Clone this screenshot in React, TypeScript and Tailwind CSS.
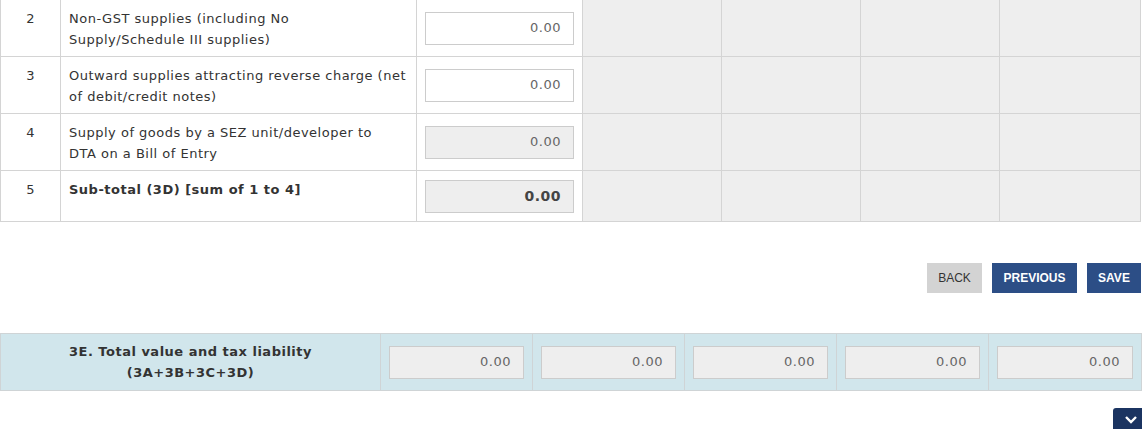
import React from "react";

const font = { fontFamily: '"DejaVu Sans", Verdana, sans-serif' };
const btnFont = { fontFamily: '"Liberation Sans", Arial, sans-serif' };

function Inp({ disabled, bold }: { disabled?: boolean; bold?: boolean }) {
  return (
    <div
      className={`h-[33px] w-[149px] border border-[#cccccc] flex items-center justify-end pr-[12px] tracking-[0.5px] ${
        disabled ? "bg-[#eeeeee]" : "bg-white"
      } ${bold ? "font-bold text-[14px] text-[#444]" : "text-[13px] text-[#666]"}`}
    >
      0.00
    </div>
  );
}

const rows = [
  { n: "2", lines: ["Non-GST supplies (including No", "Supply/Schedule III supplies)"], dis: false },
  { n: "3", lines: ["Outward supplies attracting reverse charge (net", "of debit/credit notes)"], dis: false },
  { n: "4", lines: ["Supply of goods by a SEZ unit/developer to", "DTA on a Bill of Entry"], dis: true },
];

export default function App() {
  return (
    <div className="w-[1142px] h-[429px] bg-white relative overflow-hidden text-[#333]" style={font}>
      <table className="border-collapse w-[1141px] table-fixed mt-[-1px]">
        <colgroup>
          <col className="w-[60px]" />
          <col className="w-[356px]" />
          <col className="w-[166px]" />
          <col className="w-[139px]" />
          <col className="w-[139px]" />
          <col className="w-[139px]" />
          <col className="w-[141px]" />
        </colgroup>
        <tbody>
          {rows.map((r) => (
            <tr key={r.n} className="h-[57px]">
              <td className="border border-[#d4d4d4] align-top text-center pt-[8px] text-[13px] leading-[21px]">{r.n}</td>
              <td className="border border-[#d4d4d4] align-top pt-[8px] pl-[8px] text-[13px] leading-[21px] tracking-[0.5px] whitespace-nowrap">
                {r.lines[0]}
                <br />
                {r.lines[1]}
              </td>
              <td className="border border-[#d4d4d4] align-middle pl-[8px]">
                <Inp disabled={r.dis} />
              </td>
              <td className="border border-[#d4d4d4] bg-[#eeeeee]" />
              <td className="border border-[#d4d4d4] bg-[#eeeeee]" />
              <td className="border border-[#d4d4d4] bg-[#eeeeee]" />
              <td className="border border-[#d4d4d4] bg-[#eeeeee]" />
            </tr>
          ))}
          <tr className="h-[51px]">
            <td className="border border-[#d4d4d4] align-top text-center pt-[8px] text-[13px] leading-[21px]">5</td>
            <td className="border border-[#d4d4d4] align-top pt-[8px] pl-[8px] text-[13px] leading-[21px] font-bold tracking-[0.5px] whitespace-nowrap">
              Sub-total (3D) [sum of 1 to 4]
            </td>
            <td className="border border-[#d4d4d4] align-middle pl-[8px]">
              <Inp disabled bold />
            </td>
            <td className="border border-[#d4d4d4] bg-[#eeeeee]" />
            <td className="border border-[#d4d4d4] bg-[#eeeeee]" />
            <td className="border border-[#d4d4d4] bg-[#eeeeee]" />
            <td className="border border-[#d4d4d4] bg-[#eeeeee]" />
          </tr>
        </tbody>
      </table>

      <div className="flex justify-end gap-[10px] w-[1141px] mt-[41px]" style={btnFont}>
        <button className="h-[30px] w-[55px] bg-[#d3d3d3] text-[#333] text-[12px]">BACK</button>
        <button className="h-[30px] w-[85px] bg-[#2c4e86] text-white text-[12px] font-bold">PREVIOUS</button>
        <button className="h-[30px] w-[54px] bg-[#2c4e86] text-white text-[12px] font-bold">SAVE</button>
      </div>

      <table className="border-collapse w-[1141px] table-fixed mt-[40px] bg-[#d1e6ec]">
        <colgroup>
          <col className="w-[380px]" />
          <col className="w-[152px]" />
          <col className="w-[152px]" />
          <col className="w-[152px]" />
          <col className="w-[152px]" />
          <col className="w-[153px]" />
        </colgroup>
        <tbody>
          <tr className="h-[57px]">
            <td className="border border-[#cfd4d6] text-center font-bold text-[13px] leading-[21px] tracking-[0.5px] whitespace-nowrap">
              3E. Total value and tax liability
              <br />
              (3A+3B+3C+3D)
            </td>
            {[0, 1, 2, 3, 4].map((i) => (
              <td key={i} className="border border-[#cfd4d6] align-middle px-[8px]">
                <div className="h-[33px] w-full border border-[#cccccc] bg-[#eeeeee] flex items-center justify-end pr-[12px] text-[13px] text-[#666] tracking-[0.5px]">
                  0.00
                </div>
              </td>
            ))}
          </tr>
        </tbody>
      </table>

      <div className="absolute left-[1113px] top-[408px] w-[36px] h-[30px] bg-[#1b3461] rounded-tl-[3px] flex justify-center pt-[7px]">
        <svg width="14" height="10" viewBox="0 0 14 10">
          <path d="M2 2 L7 7 L12 2" stroke="white" strokeWidth="2.4" fill="none" />
        </svg>
      </div>
    </div>
  );
}
